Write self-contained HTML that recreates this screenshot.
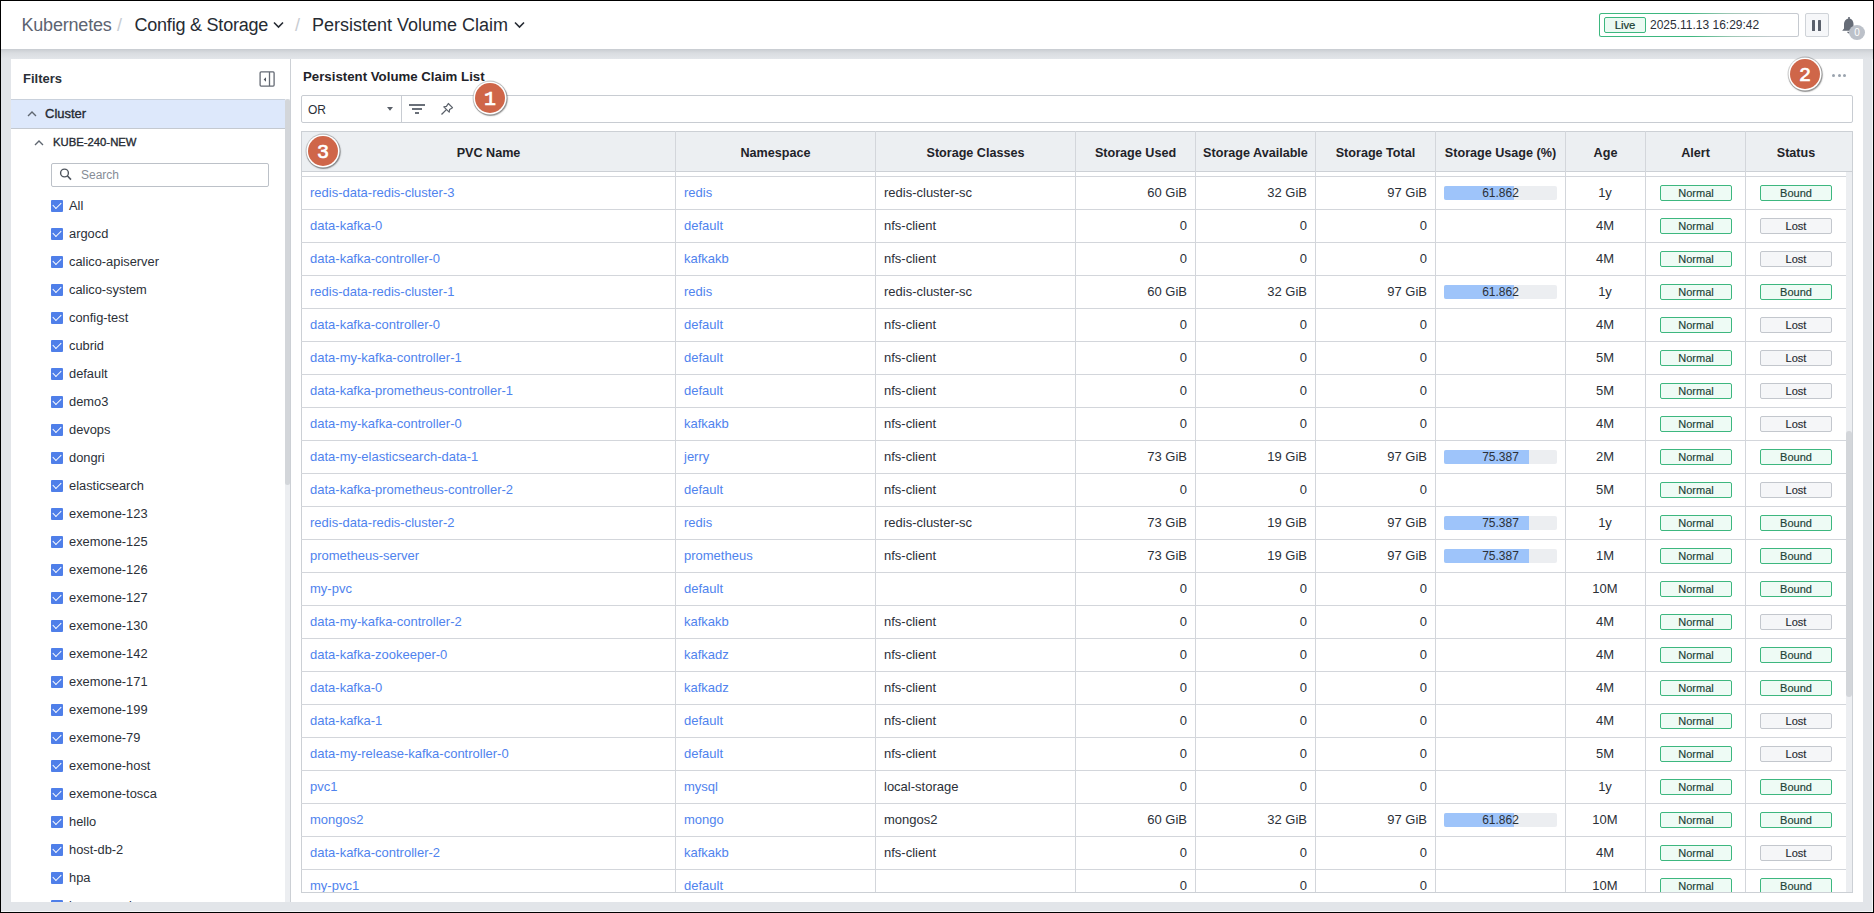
<!DOCTYPE html>
<html><head><meta charset="utf-8">
<style>
*{box-sizing:border-box;margin:0;padding:0}
html,body{width:1874px;height:913px;overflow:hidden;background:#e2e5e9;font-family:"Liberation Sans",sans-serif;color:#2b3038;position:relative}
div{position:absolute;white-space:nowrap}
.bk{background:#000}
#hdr{left:1px;top:1px;width:1872px;height:48px;background:#fff}
#hdrsh{left:1px;top:49px;width:1872px;height:10px;background:linear-gradient(#c8ccd1,#d9dce0 40%,#e2e5e9)}
.bc{top:15px;font-size:18px;line-height:20px}
.chev{width:10px;height:7px}
#panel{left:11px;top:59px;width:1852px;height:843px;background:#fff;overflow:hidden}
/* sidebar */
.sb{left:0;top:0}
.cb{left:40px;width:12px;height:12px;background:#4f7fe9;border-radius:1px}
.cb::after{content:"";position:absolute;left:2.2px;top:2.2px;width:7px;height:4px;border-left:1.5px solid #fff;border-bottom:1.5px solid #fff;transform:rotate(-45deg)}
.lbl{left:58px;font-size:12.85px;line-height:16px;color:#2b3038}
/* main */
.t{font-size:13px;line-height:16px;color:#2b3038}
.t.r{text-align:right}
.t.c{text-align:center}
.lnk{color:#4f83ee}
.hl{left:301px;width:1545px;height:1px;background:#d3d6db}
.vl{top:131px;width:1px;height:761px;background:#d3d6db}
.th{top:145px;font-size:12.6px;line-height:16px;font-weight:bold;color:#1f2329;text-align:center}
.bar{left:1444px;width:113px;height:14px;background:#eceef1;border-radius:2px;overflow:hidden}
.bar .fill{left:0;top:0;height:14px;background:#9ec4fa}
.bar span{position:absolute;left:0;top:0;width:113px;text-align:center;font-size:12px;line-height:14px;color:#2b3038}
.bdg{width:72px;height:16px;border-radius:2px;font-size:11px;line-height:14px;text-align:center;color:#1b4236;-webkit-text-stroke:0.15px #1b4236}
.bdg.ok{border:1px solid #3db77f;background:#eefbf5}
.bdg.lost{border:1px solid #c3c7cd;background:#f5f6f8;color:#262a31;-webkit-text-stroke:0.15px #262a31}
.mk{width:30px;height:30px;border-radius:50%;background:#cf6649;color:#fff;font-family:"Liberation Mono",monospace;font-size:20px;line-height:33px;-webkit-text-stroke:0.7px #fff;text-align:center;box-shadow:0 0 0 1.6px #fff,0 0 0 2.4px rgba(60,60,60,.22),0.6px 0.8px 1.2px 2.2px rgba(0,0,0,.38)}
</style></head><body>
<!-- black frame -->
<div style="left:1872px;top:1px;width:1px;height:911px;background:#f4f5f7"></div>
<div style="left:1px;top:911px;width:1872px;height:1px;background:#f4f5f7"></div>
<div class="bk" style="left:0;top:0;width:1874px;height:1px"></div>
<div class="bk" style="left:0;top:0;width:1px;height:913px"></div>
<div class="bk" style="left:1873px;top:0;width:1px;height:913px"></div>
<div class="bk" style="left:0;top:912px;width:1874px;height:1px"></div>

<div id="hdr"></div>
<div id="hdrsh"></div>
<!-- breadcrumb -->
<div class="bc" style="left:21.5px;color:#5d6471;letter-spacing:-0.2px">Kubernetes</div>
<div class="bc" style="left:117px;color:#c8ccd2">/</div>
<div class="bc" style="left:134.5px;color:#262b33;letter-spacing:-0.22px">Config &amp; Storage</div>
<svg style="position:absolute;left:273px;top:21px" width="11" height="8" viewBox="0 0 11 8"><path d="M1 1.5 L5.5 6 L10 1.5" fill="none" stroke="#262b33" stroke-width="1.6"/></svg>
<div class="bc" style="left:295px;color:#c8ccd2">/</div>
<div class="bc" style="left:312px;color:#262b33">Persistent Volume Claim</div>
<svg style="position:absolute;left:514px;top:21px" width="11" height="8" viewBox="0 0 11 8"><path d="M1 1.5 L5.5 6 L10 1.5" fill="none" stroke="#262b33" stroke-width="1.6"/></svg>

<!-- live box -->
<div style="left:1599px;top:13px;width:200px;height:24px;border-radius:2.5px;background:linear-gradient(78deg,#3db77f 45%,#9cc7b4 65%,#c6cad0 85%)"><div style="left:1px;top:1px;width:198px;height:22px;border-radius:1.5px;background:#fff"></div></div>
<div style="left:1604px;top:17px;width:42px;height:16px;border:1px solid #3db77f;border-radius:2px;background:#ecfaf3;font-size:11.3px;line-height:15px;text-align:center;color:#183b31;-webkit-text-stroke:0.2px #183b31">Live</div>
<div style="left:1650px;top:17px;font-size:12px;line-height:16px;color:#2b3038">2025.11.13 16:29:42</div>
<div style="left:1805px;top:13px;width:24px;height:24px;border:1px solid #cfd3d8;border-radius:2px;background:#f6f7f9"></div>
<div style="left:1812px;top:20px;width:3px;height:11px;background:#5a606b;border-radius:0.5px"></div>
<div style="left:1818px;top:20px;width:3px;height:11px;background:#5a606b;border-radius:0.5px"></div>
<svg style="position:absolute;left:1841px;top:16px" width="16" height="18" viewBox="0 0 16 18"><path d="M7.2 1 L8.8 1 L8.8 2.4 C11.2 3 12.5 5.2 12.5 8 L12.5 12.6 L14 14.7 L1.2 14.7 L3 12.6 L3 8 C3 5.2 4.6 3 7.2 2.4 Z M6.2 15.8 L9.8 15.8 C9.8 16.8 9 17.4 8 17.4 C7 17.4 6.2 16.8 6.2 15.8Z" fill="#666c77"/></svg>
<div style="left:1849px;top:24.5px;width:16px;height:15px;border-radius:50%;background:#bcc1c9;color:#fff;font-size:10px;line-height:15px;text-align:center">0</div>

<div id="panel">
  <!-- sidebar (coords relative to panel: x-11, y-59) -->
  <div style="left:12px;top:12px;font-size:13px;line-height:16px;font-weight:bold;color:#2b3038">Filters</div>
  <svg style="position:absolute;left:248px;top:12px" width="17" height="17" viewBox="0 0 17 17"><rect x="1.1" y="0.9" width="14" height="14.2" rx="1" fill="none" stroke="#656b75" stroke-width="1.3"/><line x1="10.5" y1="1" x2="10.5" y2="15" stroke="#656b75" stroke-width="1.3"/><path d="M4.7 8.5 L7 6.3 L7 10.7Z" fill="#4e545e"/></svg>
  <div style="left:0;top:40px;width:274px;height:30px;background:#dde8fb;border-top:1px solid #c9d1dc;border-bottom:1px solid #c4c9d0"></div>
  <svg style="position:absolute;left:15.5px;top:51px" width="10" height="7" viewBox="0 0 10 7"><path d="M1 6 L5 2 L9 6" fill="none" stroke="#5f6670" stroke-width="1.35"/></svg>
  <div style="left:34px;top:47px;font-size:13px;line-height:16px;color:#262b33;-webkit-text-stroke:0.35px #262b33">Cluster</div>
  <svg style="position:absolute;left:23px;top:80px" width="10" height="7" viewBox="0 0 10 7"><path d="M1 6 L5 2 L9 6" fill="none" stroke="#5f6670" stroke-width="1.35"/></svg>
  <div style="left:42px;top:75px;font-size:11.3px;line-height:16px;color:#262b33;-webkit-text-stroke:0.35px #262b33">KUBE-240-NEW</div>
  <div style="left:40px;top:104px;width:218px;height:24px;border:1px solid #bcc1c8;border-radius:2px"></div>
  <svg style="position:absolute;left:48px;top:107px" width="16" height="16" viewBox="0 0 16 16"><circle cx="5.5" cy="7" r="3.9" fill="none" stroke="#4f555e" stroke-width="1.4"/><line x1="8.3" y1="9.8" x2="12" y2="13.6" stroke="#4f555e" stroke-width="1.6"/></svg>
  <div style="left:70px;top:108px;font-size:12px;line-height:16px;color:#868d96">Search</div>
  <div class="sb" style="left:0;top:-59px">
  <div class="cb" style="top:200px"></div><div class="lbl" style="top:198px">All</div>
<div class="cb" style="top:228px"></div><div class="lbl" style="top:226px">argocd</div>
<div class="cb" style="top:256px"></div><div class="lbl" style="top:254px">calico-apiserver</div>
<div class="cb" style="top:284px"></div><div class="lbl" style="top:282px">calico-system</div>
<div class="cb" style="top:312px"></div><div class="lbl" style="top:310px">config-test</div>
<div class="cb" style="top:340px"></div><div class="lbl" style="top:338px">cubrid</div>
<div class="cb" style="top:368px"></div><div class="lbl" style="top:366px">default</div>
<div class="cb" style="top:396px"></div><div class="lbl" style="top:394px">demo3</div>
<div class="cb" style="top:424px"></div><div class="lbl" style="top:422px">devops</div>
<div class="cb" style="top:452px"></div><div class="lbl" style="top:450px">dongri</div>
<div class="cb" style="top:480px"></div><div class="lbl" style="top:478px">elasticsearch</div>
<div class="cb" style="top:508px"></div><div class="lbl" style="top:506px">exemone-123</div>
<div class="cb" style="top:536px"></div><div class="lbl" style="top:534px">exemone-125</div>
<div class="cb" style="top:564px"></div><div class="lbl" style="top:562px">exemone-126</div>
<div class="cb" style="top:592px"></div><div class="lbl" style="top:590px">exemone-127</div>
<div class="cb" style="top:620px"></div><div class="lbl" style="top:618px">exemone-130</div>
<div class="cb" style="top:648px"></div><div class="lbl" style="top:646px">exemone-142</div>
<div class="cb" style="top:676px"></div><div class="lbl" style="top:674px">exemone-171</div>
<div class="cb" style="top:704px"></div><div class="lbl" style="top:702px">exemone-199</div>
<div class="cb" style="top:732px"></div><div class="lbl" style="top:730px">exemone-79</div>
<div class="cb" style="top:760px"></div><div class="lbl" style="top:758px">exemone-host</div>
<div class="cb" style="top:788px"></div><div class="lbl" style="top:786px">exemone-tosca</div>
<div class="cb" style="top:816px"></div><div class="lbl" style="top:814px">hello</div>
<div class="cb" style="top:844px"></div><div class="lbl" style="top:842px">host-db-2</div>
<div class="cb" style="top:872px"></div><div class="lbl" style="top:870px">hpa</div>
<div class="cb" style="top:900px"></div><div class="lbl" style="top:898px">ingress-nginx</div>
  </div>
  <div style="left:274px;top:40px;width:5px;height:803px;background:#eceef1"></div>
  <div style="left:274px;top:40px;width:5px;height:386px;background:#d3d6da;border-radius:2.5px"></div>
  <div style="left:279px;top:0;width:1px;height:843px;background:#ccd0d5"></div>
</div>

<!-- main title etc -->
<div style="left:303px;top:69px;font-size:13.25px;line-height:16px;font-weight:bold;color:#1f2329">Persistent Volume Claim List</div>
<div style="left:1832px;top:73.5px;width:3px;height:3px;border-radius:50%;background:#9aa3ae"></div>
<div style="left:1837.5px;top:73.5px;width:3px;height:3px;border-radius:50%;background:#9aa3ae"></div>
<div style="left:1843px;top:73.5px;width:3px;height:3px;border-radius:50%;background:#9aa3ae"></div>

<!-- toolbar -->
<div style="left:301px;top:95px;width:1552px;height:28px;border:1px solid #c8ccd2;border-radius:2px"></div>
<div style="left:401px;top:95px;width:1px;height:28px;background:#c8ccd2"></div>
<div style="left:308px;top:102px;font-size:12px;line-height:16px;color:#2b3038">OR</div>
<svg style="position:absolute;left:386px;top:106px" width="8" height="6" viewBox="0 0 8 6"><path d="M1 1 L7 1 L4 4.8Z" fill="#5a6069"/></svg>
<div style="left:409px;top:104px;width:16px;height:2px;background:#6a7079"></div>
<div style="left:412px;top:108px;width:10px;height:2px;background:#6a7079"></div>
<div style="left:415px;top:112px;width:4px;height:2px;background:#6a7079"></div>
<svg style="position:absolute;left:439px;top:101px" width="16" height="16" viewBox="0 0 16 16"><path d="M9.3 2.5 L13.5 6.7 L12.3 7.4 L10.6 8.6 L10.2 11.2 L4.8 5.8 L7.4 5.4 L8.6 3.7 Z" fill="none" stroke="#5a6069" stroke-width="1.2" stroke-linejoin="round"/><line x1="7.4" y1="8.6" x2="2.5" y2="13.5" stroke="#5a6069" stroke-width="1.3"/></svg>

<!-- table -->
<div style="left:301px;top:131px;width:1552px;height:762px;border:1px solid #ccd0d5"></div>
<div style="left:302px;top:132px;width:1550px;height:39px;background:#eceff2"></div>
<div style="left:302px;top:171px;width:1550px;height:1px;background:#ccd0d5"></div>
<div style="left:302px;top:172px;width:1544px;height:720px;overflow:hidden">
</div>
<div class="vl" style="left:675px"></div>
<div class="vl" style="left:875px"></div>
<div class="vl" style="left:1075px"></div>
<div class="vl" style="left:1195px"></div>
<div class="vl" style="left:1315px"></div>
<div class="vl" style="left:1435px"></div>
<div class="vl" style="left:1565px"></div>
<div class="vl" style="left:1645px"></div>
<div class="vl" style="left:1745px"></div>
<div class="hl" style="top:176px"></div>
<div class="hl" style="top:209px"></div>
<div class="hl" style="top:242px"></div>
<div class="hl" style="top:275px"></div>
<div class="hl" style="top:308px"></div>
<div class="hl" style="top:341px"></div>
<div class="hl" style="top:374px"></div>
<div class="hl" style="top:407px"></div>
<div class="hl" style="top:440px"></div>
<div class="hl" style="top:473px"></div>
<div class="hl" style="top:506px"></div>
<div class="hl" style="top:539px"></div>
<div class="hl" style="top:572px"></div>
<div class="hl" style="top:605px"></div>
<div class="hl" style="top:638px"></div>
<div class="hl" style="top:671px"></div>
<div class="hl" style="top:704px"></div>
<div class="hl" style="top:737px"></div>
<div class="hl" style="top:770px"></div>
<div class="hl" style="top:803px"></div>
<div class="hl" style="top:836px"></div>
<div class="hl" style="top:869px"></div>
<div class="th" style="left:302px;width:373px">PVC Name</div>
<div class="th" style="left:676px;width:199px">Namespace</div>
<div class="th" style="left:876px;width:199px">Storage Classes</div>
<div class="th" style="left:1076px;width:119px">Storage Used</div>
<div class="th" style="left:1196px;width:119px">Storage Available</div>
<div class="th" style="left:1316px;width:119px">Storage Total</div>
<div class="th" style="left:1436px;width:129px">Storage Usage (%)</div>
<div class="th" style="left:1566px;width:79px">Age</div>
<div class="th" style="left:1646px;width:99px">Alert</div>
<div class="th" style="left:1746px;width:100px">Status</div>
<div id="body" style="left:0;top:172px;width:1846px;height:720px;overflow:hidden">
  <div style="left:0;top:-172px;width:1846px;height:1100px">
<div class="t lnk" style="left:310px;top:185px">redis-data-redis-cluster-3</div>
<div class="t lnk" style="left:684px;top:185px">redis</div>
<div class="t" style="left:884px;top:185px">redis-cluster-sc</div>
<div class="t r" style="right:659px;top:185px">60 GiB</div>
<div class="t r" style="right:539px;top:185px">32 GiB</div>
<div class="t r" style="right:419px;top:185px">97 GiB</div>
<div class="bar" style="top:186px"><div class="fill" style="width:70px"></div><span>61.862</span></div>
<div class="t c" style="left:1565px;width:80px;top:185px">1y</div>
<div class="bdg ok" style="left:1660px;top:185px">Normal</div>
<div class="bdg ok" style="left:1760px;top:185px">Bound</div>
<div class="t lnk" style="left:310px;top:218px">data-kafka-0</div>
<div class="t lnk" style="left:684px;top:218px">default</div>
<div class="t" style="left:884px;top:218px">nfs-client</div>
<div class="t r" style="right:659px;top:218px">0</div>
<div class="t r" style="right:539px;top:218px">0</div>
<div class="t r" style="right:419px;top:218px">0</div>
<div class="t c" style="left:1565px;width:80px;top:218px">4M</div>
<div class="bdg ok" style="left:1660px;top:218px">Normal</div>
<div class="bdg lost" style="left:1760px;top:218px">Lost</div>
<div class="t lnk" style="left:310px;top:251px">data-kafka-controller-0</div>
<div class="t lnk" style="left:684px;top:251px">kafkakb</div>
<div class="t" style="left:884px;top:251px">nfs-client</div>
<div class="t r" style="right:659px;top:251px">0</div>
<div class="t r" style="right:539px;top:251px">0</div>
<div class="t r" style="right:419px;top:251px">0</div>
<div class="t c" style="left:1565px;width:80px;top:251px">4M</div>
<div class="bdg ok" style="left:1660px;top:251px">Normal</div>
<div class="bdg lost" style="left:1760px;top:251px">Lost</div>
<div class="t lnk" style="left:310px;top:284px">redis-data-redis-cluster-1</div>
<div class="t lnk" style="left:684px;top:284px">redis</div>
<div class="t" style="left:884px;top:284px">redis-cluster-sc</div>
<div class="t r" style="right:659px;top:284px">60 GiB</div>
<div class="t r" style="right:539px;top:284px">32 GiB</div>
<div class="t r" style="right:419px;top:284px">97 GiB</div>
<div class="bar" style="top:285px"><div class="fill" style="width:70px"></div><span>61.862</span></div>
<div class="t c" style="left:1565px;width:80px;top:284px">1y</div>
<div class="bdg ok" style="left:1660px;top:284px">Normal</div>
<div class="bdg ok" style="left:1760px;top:284px">Bound</div>
<div class="t lnk" style="left:310px;top:317px">data-kafka-controller-0</div>
<div class="t lnk" style="left:684px;top:317px">default</div>
<div class="t" style="left:884px;top:317px">nfs-client</div>
<div class="t r" style="right:659px;top:317px">0</div>
<div class="t r" style="right:539px;top:317px">0</div>
<div class="t r" style="right:419px;top:317px">0</div>
<div class="t c" style="left:1565px;width:80px;top:317px">4M</div>
<div class="bdg ok" style="left:1660px;top:317px">Normal</div>
<div class="bdg lost" style="left:1760px;top:317px">Lost</div>
<div class="t lnk" style="left:310px;top:350px">data-my-kafka-controller-1</div>
<div class="t lnk" style="left:684px;top:350px">default</div>
<div class="t" style="left:884px;top:350px">nfs-client</div>
<div class="t r" style="right:659px;top:350px">0</div>
<div class="t r" style="right:539px;top:350px">0</div>
<div class="t r" style="right:419px;top:350px">0</div>
<div class="t c" style="left:1565px;width:80px;top:350px">5M</div>
<div class="bdg ok" style="left:1660px;top:350px">Normal</div>
<div class="bdg lost" style="left:1760px;top:350px">Lost</div>
<div class="t lnk" style="left:310px;top:383px">data-kafka-prometheus-controller-1</div>
<div class="t lnk" style="left:684px;top:383px">default</div>
<div class="t" style="left:884px;top:383px">nfs-client</div>
<div class="t r" style="right:659px;top:383px">0</div>
<div class="t r" style="right:539px;top:383px">0</div>
<div class="t r" style="right:419px;top:383px">0</div>
<div class="t c" style="left:1565px;width:80px;top:383px">5M</div>
<div class="bdg ok" style="left:1660px;top:383px">Normal</div>
<div class="bdg lost" style="left:1760px;top:383px">Lost</div>
<div class="t lnk" style="left:310px;top:416px">data-my-kafka-controller-0</div>
<div class="t lnk" style="left:684px;top:416px">kafkakb</div>
<div class="t" style="left:884px;top:416px">nfs-client</div>
<div class="t r" style="right:659px;top:416px">0</div>
<div class="t r" style="right:539px;top:416px">0</div>
<div class="t r" style="right:419px;top:416px">0</div>
<div class="t c" style="left:1565px;width:80px;top:416px">4M</div>
<div class="bdg ok" style="left:1660px;top:416px">Normal</div>
<div class="bdg lost" style="left:1760px;top:416px">Lost</div>
<div class="t lnk" style="left:310px;top:449px">data-my-elasticsearch-data-1</div>
<div class="t lnk" style="left:684px;top:449px">jerry</div>
<div class="t" style="left:884px;top:449px">nfs-client</div>
<div class="t r" style="right:659px;top:449px">73 GiB</div>
<div class="t r" style="right:539px;top:449px">19 GiB</div>
<div class="t r" style="right:419px;top:449px">97 GiB</div>
<div class="bar" style="top:450px"><div class="fill" style="width:85px"></div><span>75.387</span></div>
<div class="t c" style="left:1565px;width:80px;top:449px">2M</div>
<div class="bdg ok" style="left:1660px;top:449px">Normal</div>
<div class="bdg ok" style="left:1760px;top:449px">Bound</div>
<div class="t lnk" style="left:310px;top:482px">data-kafka-prometheus-controller-2</div>
<div class="t lnk" style="left:684px;top:482px">default</div>
<div class="t" style="left:884px;top:482px">nfs-client</div>
<div class="t r" style="right:659px;top:482px">0</div>
<div class="t r" style="right:539px;top:482px">0</div>
<div class="t r" style="right:419px;top:482px">0</div>
<div class="t c" style="left:1565px;width:80px;top:482px">5M</div>
<div class="bdg ok" style="left:1660px;top:482px">Normal</div>
<div class="bdg lost" style="left:1760px;top:482px">Lost</div>
<div class="t lnk" style="left:310px;top:515px">redis-data-redis-cluster-2</div>
<div class="t lnk" style="left:684px;top:515px">redis</div>
<div class="t" style="left:884px;top:515px">redis-cluster-sc</div>
<div class="t r" style="right:659px;top:515px">73 GiB</div>
<div class="t r" style="right:539px;top:515px">19 GiB</div>
<div class="t r" style="right:419px;top:515px">97 GiB</div>
<div class="bar" style="top:516px"><div class="fill" style="width:85px"></div><span>75.387</span></div>
<div class="t c" style="left:1565px;width:80px;top:515px">1y</div>
<div class="bdg ok" style="left:1660px;top:515px">Normal</div>
<div class="bdg ok" style="left:1760px;top:515px">Bound</div>
<div class="t lnk" style="left:310px;top:548px">prometheus-server</div>
<div class="t lnk" style="left:684px;top:548px">prometheus</div>
<div class="t" style="left:884px;top:548px">nfs-client</div>
<div class="t r" style="right:659px;top:548px">73 GiB</div>
<div class="t r" style="right:539px;top:548px">19 GiB</div>
<div class="t r" style="right:419px;top:548px">97 GiB</div>
<div class="bar" style="top:549px"><div class="fill" style="width:85px"></div><span>75.387</span></div>
<div class="t c" style="left:1565px;width:80px;top:548px">1M</div>
<div class="bdg ok" style="left:1660px;top:548px">Normal</div>
<div class="bdg ok" style="left:1760px;top:548px">Bound</div>
<div class="t lnk" style="left:310px;top:581px">my-pvc</div>
<div class="t lnk" style="left:684px;top:581px">default</div>
<div class="t r" style="right:659px;top:581px">0</div>
<div class="t r" style="right:539px;top:581px">0</div>
<div class="t r" style="right:419px;top:581px">0</div>
<div class="t c" style="left:1565px;width:80px;top:581px">10M</div>
<div class="bdg ok" style="left:1660px;top:581px">Normal</div>
<div class="bdg ok" style="left:1760px;top:581px">Bound</div>
<div class="t lnk" style="left:310px;top:614px">data-my-kafka-controller-2</div>
<div class="t lnk" style="left:684px;top:614px">kafkakb</div>
<div class="t" style="left:884px;top:614px">nfs-client</div>
<div class="t r" style="right:659px;top:614px">0</div>
<div class="t r" style="right:539px;top:614px">0</div>
<div class="t r" style="right:419px;top:614px">0</div>
<div class="t c" style="left:1565px;width:80px;top:614px">4M</div>
<div class="bdg ok" style="left:1660px;top:614px">Normal</div>
<div class="bdg lost" style="left:1760px;top:614px">Lost</div>
<div class="t lnk" style="left:310px;top:647px">data-kafka-zookeeper-0</div>
<div class="t lnk" style="left:684px;top:647px">kafkadz</div>
<div class="t" style="left:884px;top:647px">nfs-client</div>
<div class="t r" style="right:659px;top:647px">0</div>
<div class="t r" style="right:539px;top:647px">0</div>
<div class="t r" style="right:419px;top:647px">0</div>
<div class="t c" style="left:1565px;width:80px;top:647px">4M</div>
<div class="bdg ok" style="left:1660px;top:647px">Normal</div>
<div class="bdg ok" style="left:1760px;top:647px">Bound</div>
<div class="t lnk" style="left:310px;top:680px">data-kafka-0</div>
<div class="t lnk" style="left:684px;top:680px">kafkadz</div>
<div class="t" style="left:884px;top:680px">nfs-client</div>
<div class="t r" style="right:659px;top:680px">0</div>
<div class="t r" style="right:539px;top:680px">0</div>
<div class="t r" style="right:419px;top:680px">0</div>
<div class="t c" style="left:1565px;width:80px;top:680px">4M</div>
<div class="bdg ok" style="left:1660px;top:680px">Normal</div>
<div class="bdg ok" style="left:1760px;top:680px">Bound</div>
<div class="t lnk" style="left:310px;top:713px">data-kafka-1</div>
<div class="t lnk" style="left:684px;top:713px">default</div>
<div class="t" style="left:884px;top:713px">nfs-client</div>
<div class="t r" style="right:659px;top:713px">0</div>
<div class="t r" style="right:539px;top:713px">0</div>
<div class="t r" style="right:419px;top:713px">0</div>
<div class="t c" style="left:1565px;width:80px;top:713px">4M</div>
<div class="bdg ok" style="left:1660px;top:713px">Normal</div>
<div class="bdg lost" style="left:1760px;top:713px">Lost</div>
<div class="t lnk" style="left:310px;top:746px">data-my-release-kafka-controller-0</div>
<div class="t lnk" style="left:684px;top:746px">default</div>
<div class="t" style="left:884px;top:746px">nfs-client</div>
<div class="t r" style="right:659px;top:746px">0</div>
<div class="t r" style="right:539px;top:746px">0</div>
<div class="t r" style="right:419px;top:746px">0</div>
<div class="t c" style="left:1565px;width:80px;top:746px">5M</div>
<div class="bdg ok" style="left:1660px;top:746px">Normal</div>
<div class="bdg lost" style="left:1760px;top:746px">Lost</div>
<div class="t lnk" style="left:310px;top:779px">pvc1</div>
<div class="t lnk" style="left:684px;top:779px">mysql</div>
<div class="t" style="left:884px;top:779px">local-storage</div>
<div class="t r" style="right:659px;top:779px">0</div>
<div class="t r" style="right:539px;top:779px">0</div>
<div class="t r" style="right:419px;top:779px">0</div>
<div class="t c" style="left:1565px;width:80px;top:779px">1y</div>
<div class="bdg ok" style="left:1660px;top:779px">Normal</div>
<div class="bdg ok" style="left:1760px;top:779px">Bound</div>
<div class="t lnk" style="left:310px;top:812px">mongos2</div>
<div class="t lnk" style="left:684px;top:812px">mongo</div>
<div class="t" style="left:884px;top:812px">mongos2</div>
<div class="t r" style="right:659px;top:812px">60 GiB</div>
<div class="t r" style="right:539px;top:812px">32 GiB</div>
<div class="t r" style="right:419px;top:812px">97 GiB</div>
<div class="bar" style="top:813px"><div class="fill" style="width:70px"></div><span>61.862</span></div>
<div class="t c" style="left:1565px;width:80px;top:812px">10M</div>
<div class="bdg ok" style="left:1660px;top:812px">Normal</div>
<div class="bdg ok" style="left:1760px;top:812px">Bound</div>
<div class="t lnk" style="left:310px;top:845px">data-kafka-controller-2</div>
<div class="t lnk" style="left:684px;top:845px">kafkakb</div>
<div class="t" style="left:884px;top:845px">nfs-client</div>
<div class="t r" style="right:659px;top:845px">0</div>
<div class="t r" style="right:539px;top:845px">0</div>
<div class="t r" style="right:419px;top:845px">0</div>
<div class="t c" style="left:1565px;width:80px;top:845px">4M</div>
<div class="bdg ok" style="left:1660px;top:845px">Normal</div>
<div class="bdg lost" style="left:1760px;top:845px">Lost</div>
<div class="t lnk" style="left:310px;top:878px">my-pvc1</div>
<div class="t lnk" style="left:684px;top:878px">default</div>
<div class="t r" style="right:659px;top:878px">0</div>
<div class="t r" style="right:539px;top:878px">0</div>
<div class="t r" style="right:419px;top:878px">0</div>
<div class="t c" style="left:1565px;width:80px;top:878px">10M</div>
<div class="bdg ok" style="left:1660px;top:878px">Normal</div>
<div class="bdg ok" style="left:1760px;top:878px">Bound</div>
  </div>
</div>
<div style="left:1846px;top:172px;width:6px;height:720px;background:#eceef1"></div>
<div style="left:1846px;top:431px;width:6px;height:266px;background:#d3d6da;border-radius:3px"></div>

<!-- markers -->
<div class="mk" style="left:475px;top:83px">1</div>
<div class="mk" style="left:1790px;top:59px">2</div>
<div class="mk" style="left:308px;top:136px">3</div>
</body></html>
